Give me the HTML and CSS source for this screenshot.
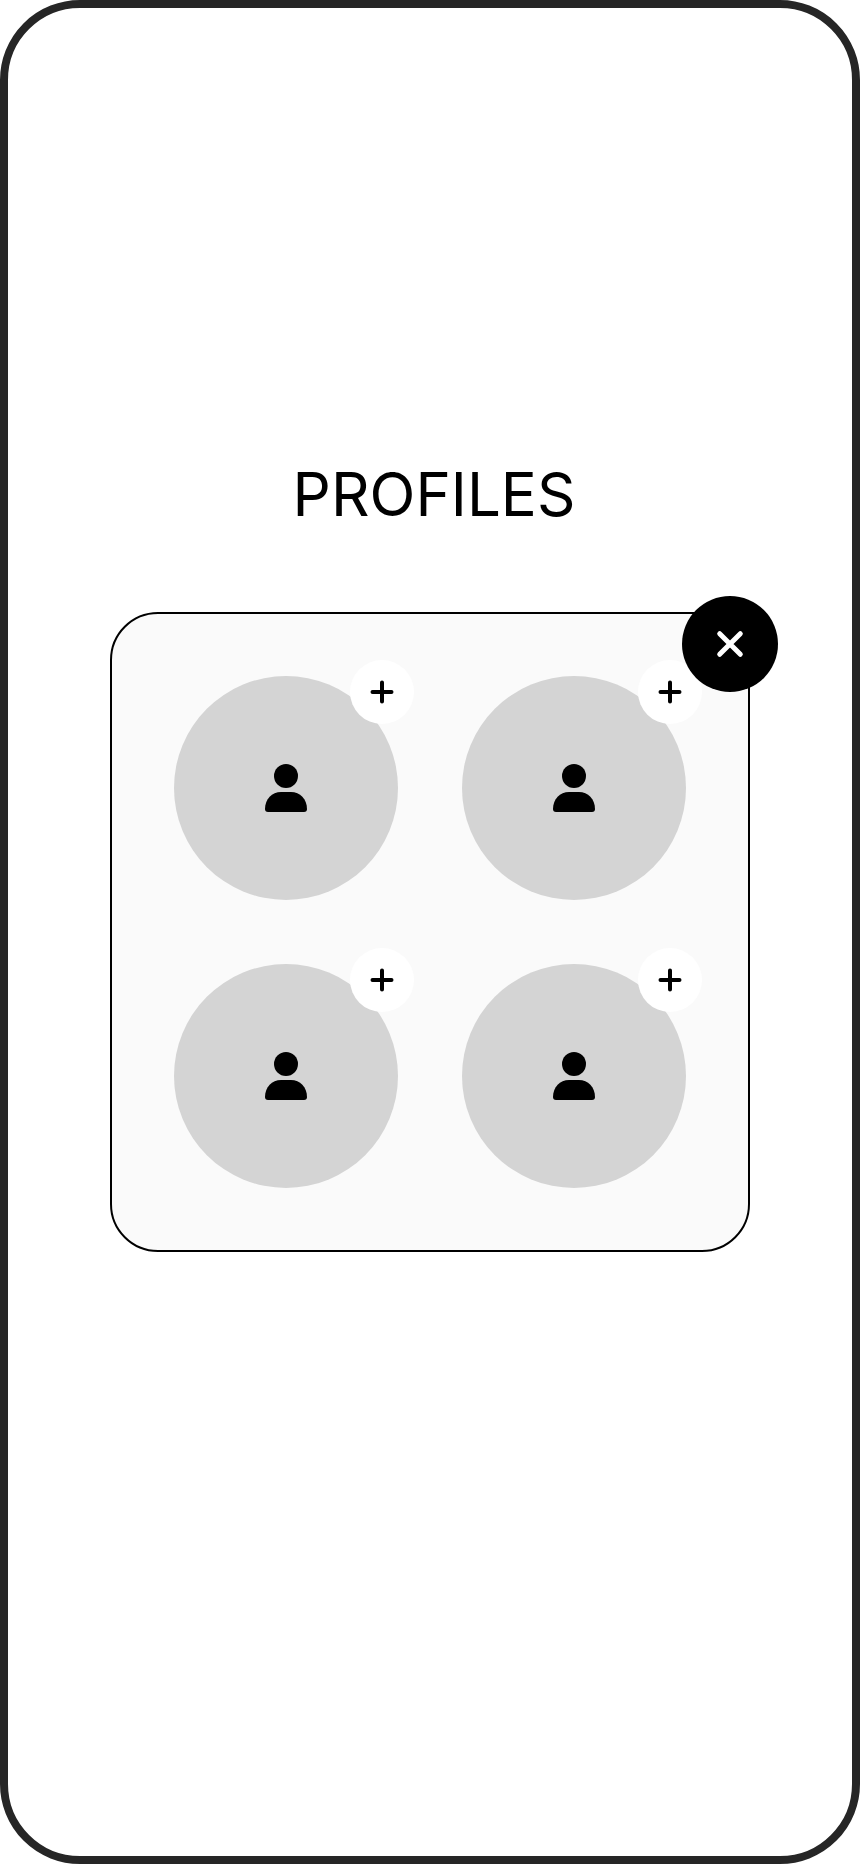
FILE: index.html
```html
<!DOCTYPE html>
<html lang="en">
<head>
<meta charset="utf-8">
<meta name="viewport" content="width=device-width, initial-scale=1">
<title>Profiles</title>
<link rel="stylesheet" href="styles.css">
</head>
<body>
<svg class="symbols" aria-hidden="true">
  <symbol id="person" viewBox="0 0 48 48">
    <circle cx="24" cy="12" r="12"/>
    <path d="M19 28H29C38 28 45 35 45 45Q45 48 42 48H6Q3 48 3 45C3 35 10 28 19 28Z"/>
  </symbol>
  <symbol id="plus" viewBox="0 0 24 24">
    <path d="M12 2.5V21.5M2.5 12H21.5"/>
  </symbol>
  <symbol id="cross" viewBox="0 0 32 32">
    <path d="M5.7 5.7L26.3 26.3M26.3 5.7L5.7 26.3"/>
  </symbol>
</svg>
<main class="screen">
  <section class="profiles">
    <h1 class="title">PROFILES</h1>
    <div class="panel">
      <div class="profile">
        <button class="avatar" type="button" aria-label="Profile 1"><svg class="person"><use href="#person"/></svg></button>
        <button class="add" type="button" aria-label="Add profile 1"><svg class="plus"><use href="#plus"/></svg></button>
      </div>
      <div class="profile">
        <button class="avatar" type="button" aria-label="Profile 2"><svg class="person"><use href="#person"/></svg></button>
        <button class="add" type="button" aria-label="Add profile 2"><svg class="plus"><use href="#plus"/></svg></button>
      </div>
      <div class="profile">
        <button class="avatar" type="button" aria-label="Profile 3"><svg class="person"><use href="#person"/></svg></button>
        <button class="add" type="button" aria-label="Add profile 3"><svg class="plus"><use href="#plus"/></svg></button>
      </div>
      <div class="profile">
        <button class="avatar" type="button" aria-label="Profile 4"><svg class="person"><use href="#person"/></svg></button>
        <button class="add" type="button" aria-label="Add profile 4"><svg class="plus"><use href="#plus"/></svg></button>
      </div>
      <button class="close" type="button" aria-label="Close"><svg class="cross"><use href="#cross"/></svg></button>
    </div>
  </section>
</main>
</body>
</html>
```
FILE: styles.css
```css
* {
  box-sizing: border-box;
}

body {
  margin: 0;
  background: #fff;
  color: #000;
  font-family: Inter, "Liberation Sans", sans-serif;
}

button {
  display: grid;
  place-items: center;
  padding: 0;
  border: 0;
  border-radius: 50%;
  color: inherit;
  cursor: pointer;
}

.symbols {
  position: absolute;
  width: 0;
  height: 0;
}

.screen {
  display: grid;
  align-items: center;
  min-height: 100vh;
  padding: 0 102px;
  border: 8px solid #262626;
  border-radius: 80px;
  background: #fff;
}

.profiles {
  display: grid;
  grid-template-rows: 1fr auto 1fr;
  min-height: 100%;
}

.title {
  align-self: end;
  margin: 0 0 82px;
  padding-left: 8px;
  font-size: 60px;
  font-weight: 400;
  line-height: 72px;
  text-align: center;
}

.panel {
  position: relative;
  display: grid;
  grid-template-columns: 1fr 1fr;
  gap: 64px;
  padding: 62px;
  border: 2px solid #000;
  border-radius: 48px;
  background: #fafafa;
}

.profile {
  position: relative;
}

.avatar {
  width: 100%;
  aspect-ratio: 1;
  background: #d4d4d4;
}

.add {
  position: absolute;
  top: -16px;
  right: -16px;
  width: 64px;
  height: 64px;
  background: #fff;
}

.close {
  position: absolute;
  top: -18px;
  right: -30px;
  width: 96px;
  height: 96px;
  background: #000;
  color: #fff;
}

.person {
  width: 48px;
  height: 48px;
  fill: currentColor;
}

.plus {
  width: 24px;
  height: 24px;
  stroke: currentColor;
  stroke-width: 4;
  stroke-linecap: round;
}

.cross {
  width: 32px;
  height: 32px;
  stroke: currentColor;
  stroke-width: 5;
  stroke-linecap: round;
}
```
